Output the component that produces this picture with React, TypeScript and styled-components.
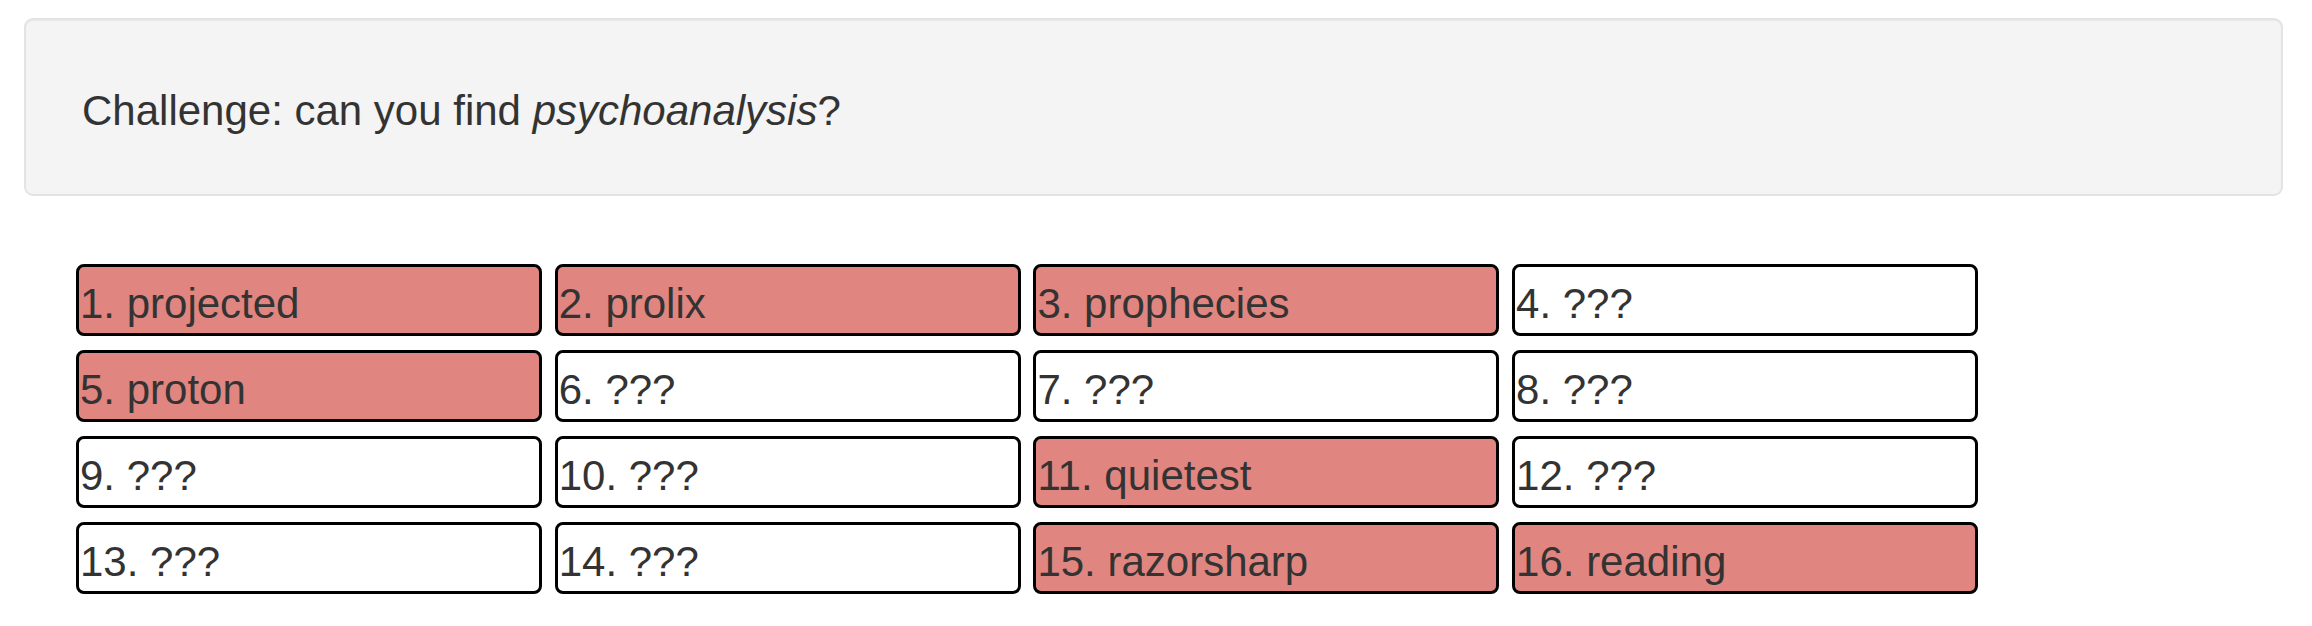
import React from "react";
import styled, { createGlobalStyle } from "styled-components";

const GlobalStyle = createGlobalStyle`
  html, body {
    margin: 0;
    padding: 0;
    background: #ffffff;
  }
  body {
    font-family: "Liberation Sans", Arial, Helvetica, sans-serif;
    color: #333333;
  }
`;

const Page = styled.div`
  padding: 18px 29px 0 24px;
`;

const Well = styled.div`
  background: #f4f4f4;
  border: 2px solid #e3e3e3;
  border-radius: 9px;
  box-shadow: inset 0 1px 1px rgba(0, 0, 0, 0.05);
  padding: 67px 56px 59px;
  font-size: 42px;
  line-height: 48px;
`;

const Board = styled.div`
  display: grid;
  grid-template-columns: repeat(4, 466px);
  grid-auto-rows: 72px;
  column-gap: 12.7px;
  row-gap: 14px;
  margin: 68px 0 0 52px;
`;

const Cell = styled.div<{ $found: boolean }>`
  box-sizing: border-box;
  border: 3px solid #000000;
  border-radius: 8px;
  background: ${(p) => (p.$found ? "#e0857f" : "#ffffff")};
  padding: 13px 0 0 1px;
  font-size: 42px;
  line-height: 48px;
  color: #333333;
  white-space: nowrap;
  overflow: hidden;
`;

type Word = { n: number; text?: string };

const words: Word[] = [
  { n: 1, text: "projected" },
  { n: 2, text: "prolix" },
  { n: 3, text: "prophecies" },
  { n: 4 },
  { n: 5, text: "proton" },
  { n: 6 },
  { n: 7 },
  { n: 8 },
  { n: 9 },
  { n: 10 },
  { n: 11, text: "quietest" },
  { n: 12 },
  { n: 13 },
  { n: 14 },
  { n: 15, text: "razorsharp" },
  { n: 16, text: "reading" },
];

export default function App() {
  return (
    <>
      <GlobalStyle />
      <Page>
        <Well>
          Challenge: can you find <em>psychoanalysis</em>?
        </Well>
        <Board>
          {words.map((w) => (
            <Cell key={w.n} $found={!!w.text}>
              {w.n}. {w.text ?? "???"}
            </Cell>
          ))}
        </Board>
      </Page>
    </>
  );
}
